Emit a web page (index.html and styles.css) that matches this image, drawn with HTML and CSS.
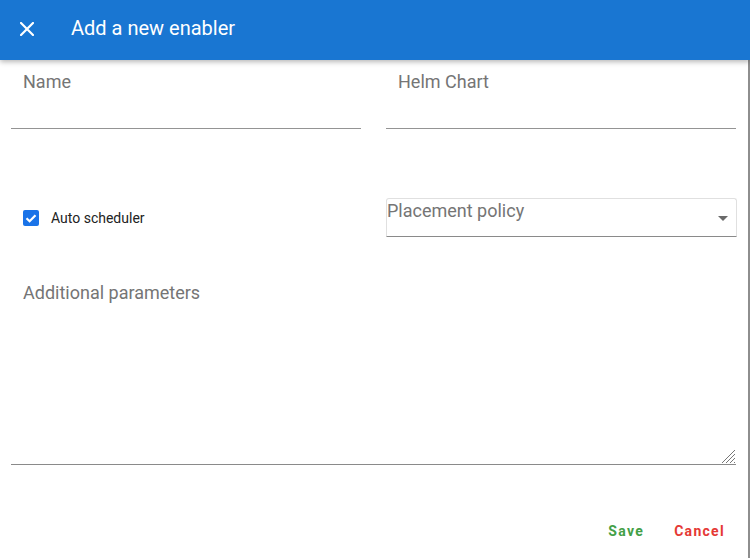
FILE: index.html
```html
<!DOCTYPE html>
<html>
<head>
<meta charset="utf-8">
<link rel="stylesheet" href="styles.css">
</head>
<body>
<div class="dialog">
  <header class="header">
    <svg class="close" width="14" height="14" viewBox="0 0 14 14"><path d="M1 1L13 13M13 1L1 13" stroke="#fff" stroke-width="2.2" stroke-linecap="square"/></svg>
    <h1 class="title">Add a new enabler</h1>
  </header>
  <main class="content">
    <div class="row row-top">
      <div class="field">
        <label class="label">Name</label>
        <div class="input"></div>
      </div>
      <div class="field">
        <label class="label">Helm Chart</label>
        <div class="input"></div>
      </div>
    </div>
    <div class="row row-mid">
      <div class="check">
        <span class="box"><svg width="16" height="16" viewBox="0 0 16 16"><path d="M3.5 8.2L6.6 11.2L12.5 5.2" fill="none" stroke="#fff" stroke-width="2.2"/></svg></span>
        <span class="check-label">Auto scheduler</span>
      </div>
      <div class="select">
        <span class="select-text">Placement policy</span>
        <span class="arrow"></span>
      </div>
    </div>
    <div class="area-field">
      <label class="label">Additional parameters</label>
      <div class="area">
        <svg class="grip" width="14" height="14" viewBox="0 0 14 14"><path d="M1 14L14 1M5 14L14 5M9 14L14 9M13 14L14 13" stroke="#777" stroke-width="1"/></svg>
      </div>
    </div>
    <div class="actions">
      <button class="btn save">Save</button>
      <button class="btn cancel">Cancel</button>
    </div>
  </main>
</div>
</body>
</html>
```
FILE: styles.css
```css
* { box-sizing: border-box; }
html, body { margin: 0; padding: 0; background: #fff; }
body { font-family: Roboto, "Noto Sans", sans-serif; width: 750px; height: 558px; overflow: hidden; }
.dialog { display: flex; flex-direction: column; height: 558px; }
.header {
  height: 60px; background: #1976d2; display: flex; align-items: center;
  padding-left: 20px; padding-bottom: 4px; position: relative; z-index: 1;
  box-shadow: 0 2px 5px rgba(0,0,0,0.28);
}
.close { display: block; margin-top: 1px; }
.title { margin: 0 0 0 37px; color: #fff; font-weight: 400; font-size: 20px; line-height: 24px; }
.content {
  flex: 1; display: flex; flex-direction: column;
  padding: 11px 12px 0 11px; border-right: 2px solid #8e8e8e;
}
.row { display: grid; grid-template-columns: 350px 350px; column-gap: 25px; }
.label { display: block; padding-left: 12px; font-size: 18px; line-height: 21px; color: #757575; }
.input { height: 37px; border-bottom: 1px solid #949494; }
.row-mid { margin-top: 69px; align-items: center; }
.check { display: flex; align-items: center; padding-left: 12px; margin-top: 1px; }
.box { width: 16px; height: 16px; border-radius: 2px; background: #1a73e8; display: block; }
.box svg { display: block; }
.check-label { margin-left: 12px; font-size: 14px; color: #222; line-height: 16px; }
.select {
  width: 351px;
  height: 39px; border: 1px solid #e0e0e0; border-bottom-color: #8a8a8a;
  border-radius: 3px 3px 0 0; display: flex; justify-content: space-between;
  padding: 1px 8px 0 0; position: relative;
}
.select-text { font-size: 18px; line-height: 21px; color: #757575; }
.arrow {
  width: 0; height: 0; margin-top: 16px;
  border-left: 5px solid transparent; border-right: 5px solid transparent;
  border-top: 5px solid #6a6a6a;
}
.area-field { margin-top: 45px; width: 725px; }
.area { height: 162px; border-bottom: 1px solid #8a8a8a; display: flex; justify-content: flex-end; align-items: flex-end; }
.grip { display: block; margin: 0 1px 1px 0; }
.actions { display: flex; justify-content: flex-end; margin-top: 58px; padding-right: 11px; gap: 30px; }
.btn {
  background: none; border: 0; padding: 0; font-family: Roboto, sans-serif;
  font-weight: 700; font-size: 14px; line-height: 16px; letter-spacing: 1.3px; cursor: pointer;
}
.save { color: #43a047; }
.cancel { color: #e53935; }
```
